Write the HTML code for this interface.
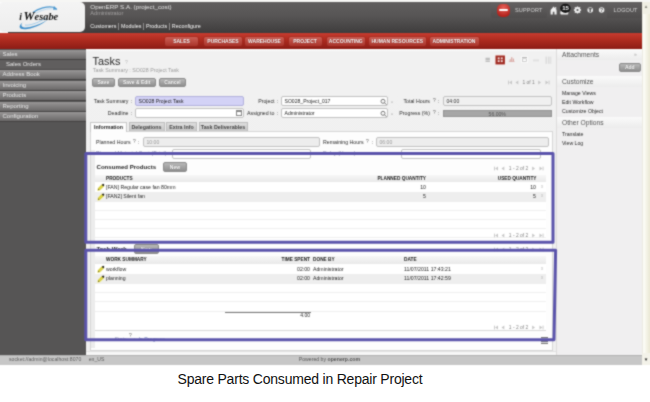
<!DOCTYPE html>
<html>
<head>
<meta charset="utf-8">
<title>Spare Parts Consumed in Repair Project</title>
<style>
html,body{margin:0;padding:0;}
body{width:650px;height:402px;position:relative;overflow:hidden;background:#fff;font-family:"Liberation Sans",sans-serif;}
#shot{position:absolute;left:0;top:0;width:650px;height:368px;overflow:hidden;background:#fff;filter:url(#soft);}
.a{position:absolute;}
.t{position:absolute;white-space:nowrap;line-height:1;font-size:6px;color:#444;}
.b{font-weight:bold;}
/* header */
#hdr{left:0;top:2.4px;width:642.4px;height:31px;background:linear-gradient(#605e5e 0%,#575555 45%,#3e3c3c 100%);}
#logo{left:-1px;top:2.3px;width:86.4px;height:30.2px;background:linear-gradient(#f4f4f4,#ededed);border-radius:5px;}
#red{left:0;top:33px;width:642px;height:16px;background:linear-gradient(#c63b2f 0%,#ad2b1f 45%,#8c1c15 100%);}
.rb{position:absolute;top:36.5px;height:9px;border-radius:2px;background:linear-gradient(#cc5f55,#aa342b);box-shadow:0 0 0 1px rgba(150,40,30,.4);color:#fff;font-size:5px;font-weight:bold;text-align:center;line-height:9.5px;white-space:nowrap;text-shadow:0 0 1px rgba(70,0,0,.8);}
/* sidebar */
#side{left:0;top:49px;width:85.7px;height:306px;background:#565555;}
.mi{position:absolute;left:0;width:86px;height:10px;background:linear-gradient(#989696,#6a6868);border-bottom:1px solid #454343;box-sizing:border-box;color:#e6e6e6;font-size:6px;line-height:9px;padding-left:2.5px;white-space:nowrap;}
.mi.sub{background:#605e5e;padding-left:6px;border-bottom-color:#4c4a4a;}
/* main */
#main{left:86px;top:49px;width:470px;height:303px;background:linear-gradient(#fcfcfc 0,#f1f1f1 3px,#efefef 100%);}
#under{left:86px;top:351px;width:470px;height:4px;background:#f7f7f7;border-top:1px solid #e2e2e2;box-sizing:border-box;}
#rside{left:556px;top:49px;width:86.5px;height:306px;background:#f0eff0;border-left:1px solid #dddcdc;box-sizing:border-box;}
#scroll{left:641.6px;top:2px;width:8.4px;height:363px;background:linear-gradient(90deg,#e4e2d6 0,#fdfdf9 1.6px,#f6f5ea 4px,#e8e6d2 8.4px);}
#foot{left:0;top:355px;width:641.6px;height:9.5px;background:#c7c7c7;border-top:1px solid #b2b2b2;box-sizing:border-box;}
.btn{position:absolute;height:9px;border-radius:2px;background:linear-gradient(#b8b8b8,#8f8f8f);border:1px solid #8a8a8a;box-sizing:border-box;color:#fff;font-size:5px;font-weight:bold;text-align:center;line-height:7px;white-space:nowrap;text-shadow:0 0 1px rgba(0,0,0,.4);}
.inp{position:absolute;height:10px;background:#fff;border:1px solid #c2c2c2;border-radius:2px;box-sizing:border-box;font-size:5.1px;line-height:8px;color:#1c1c1c;padding-left:2.5px;white-space:nowrap;}
.inp.ro{background:#ededed;color:#999;}
.lbl{position:absolute;white-space:nowrap;line-height:1;font-size:5.25px;color:#2c2c2c;text-align:right;}
.tab{position:absolute;top:122px;height:9px;background:linear-gradient(#dedede,#c6c6c6);border:1px solid #bdbdbd;border-bottom:none;box-sizing:border-box;font-size:5.3px;font-weight:bold;color:#444;text-align:center;line-height:8.5px;white-space:nowrap;}
.tab.on{background:#fdfdfd;color:#222;border-color:#c8c8c8;}
.th{position:absolute;white-space:nowrap;line-height:1;font-size:4.75px;font-weight:bold;color:#1a1a1a;}
.td{position:absolute;white-space:nowrap;line-height:1;font-size:5.2px;color:#262626;}
.row{position:absolute;left:95px;width:451px;height:10px;}
.row.alt{background:#eeeeee;}
.row.ln{border-bottom:1px solid #f0f0f0;box-sizing:border-box;}
.pg{position:absolute;white-space:nowrap;line-height:1;font-size:5.3px;color:#c4c4c4;letter-spacing:.15px;word-spacing:.6px;}
.pn{color:#9c9c9c;}
.bx{position:absolute;border:3px solid #5b53ad;box-sizing:border-box;}
.rh{position:absolute;left:557px;width:85px;height:11px;background:linear-gradient(#fafafa,#ececec);font-size:6.7px;color:#545454;line-height:11px;padding-left:5px;box-sizing:border-box;white-space:nowrap;}
.rl{position:absolute;left:562px;white-space:nowrap;line-height:1;font-size:5.2px;color:#2a2a2a;}
#cap{position:absolute;left:177.5px;top:368.9px;font-size:14px;letter-spacing:-0.21px;color:#111;line-height:20px;white-space:nowrap;}
</style>
</head>
<body>
<svg width="0" height="0" style="position:absolute"><defs><filter id="soft" x="0" y="0" width="100%" height="100%" color-interpolation-filters="sRGB"><feConvolveMatrix order="3" kernelMatrix="0.04 0.1 0.04 0.1 0.44 0.1 0.04 0.1 0.04" edgeMode="duplicate" preserveAlpha="true"/></filter></defs></svg>
<div id="shot">
  <div class="a" id="hdr"></div>
  <div class="a" style="left:0;top:2px;width:8px;height:31px;background:#fbfbfb;"></div>
  <div class="a" id="logo"></div>
  <!-- logo -->
  <svg class="a" style="left:14px;top:3px" width="60" height="28" viewBox="0 0 60 28">
    <path d="M8.5 19.5C5.5 23.5 9 25.5 16 24C23 22.5 31 19 35 15.5C30 20.5 21 24.8 13.5 26C5 27.3 3.5 23.5 8.5 19.5Z" fill="#3f8fcb"/>
    <path d="M11 22C15 23 24 20 32 15" fill="none" stroke="#8fc3e8" stroke-width=".8"/>
    <path d="M19 9.5C24 5.5 33 3 39.5 4.2L42.8 6.2" fill="none" stroke="#4a97d0" stroke-width="1.1"/>
    <path d="M40 3L43.3 6.6L39 6.8Z" fill="#4a97d0"/>
    <path d="M22 10.5C27 7 34 5.5 38 6" fill="none" stroke="#a8d0ee" stroke-width=".7"/>
    <text x="5.3" y="16.6" font-family="Liberation Serif,serif" font-style="italic" font-weight="bold" font-size="9.6" fill="#111" letter-spacing=".2">i</text>
    <text x="9.6" y="17" font-family="Liberation Serif,serif" font-style="italic" font-weight="bold" font-size="12.5" fill="#111">W</text>
    <text x="20.6" y="16.8" font-family="Liberation Serif,serif" font-style="italic" font-weight="bold" font-size="9.6" fill="#111" textLength="23.6" lengthAdjust="spacingAndGlyphs">esabe</text>
  </svg>
  <div class="t" style="left:90.3px;top:4px;font-size:6.25px;color:#e2e2e2;">OpenERP S.A. (project_cost)</div>
  <div class="t" style="left:90.3px;top:11px;font-size:5.6px;color:#a3a1a1;">Administrator</div>
  <div class="t" style="left:90.3px;top:23px;font-size:5.4px;color:#f6f6f6;word-spacing:0;">Customers <span style="display:inline-block;width:0;height:7px;border-left:1px solid #8f8d8d;vertical-align:-1.6px;margin:0 .3px;"></span> Modules <span style="display:inline-block;width:0;height:7px;border-left:1px solid #8f8d8d;vertical-align:-1.6px;margin:0 .3px;"></span> Products <span style="display:inline-block;width:0;height:7px;border-left:1px solid #8f8d8d;vertical-align:-1.6px;margin:0 .3px;"></span> Reconfigure</div>

  <!-- top right -->
  <div class="a" style="left:491px;top:2.5px;width:55.5px;height:15.3px;background:linear-gradient(#626060,#4f4d4d);border-radius:0 0 2px 2px;"></div>
  <div class="a" style="left:497px;top:3.7px;width:13.4px;height:13px;border-radius:5px;background:radial-gradient(circle at 50% 30%,#e8625a,#b3221b 75%);"></div>
  <div class="a" style="left:499.4px;top:8.6px;width:8.6px;height:2.9px;background:#fff;border-radius:1px;"></div>
  <div class="t" style="left:515px;top:8px;font-size:5.5px;color:#d6d6d6;letter-spacing:.15px;">SUPPORT</div>
  <svg class="a" style="left:549px;top:2px" width="60" height="16" viewBox="0 0 60 16">
    <path d="M1.6 12.6V8L4.6 4.4L7.6 8V12.6H5.4V9.8H3.8V12.6Z" fill="#f0f0f0"/>
    <rect x="6.2" y="5" width="1" height="2.6" fill="#f0f0f0"/>
    <rect x="11.3" y="9" width="8" height="3.6" rx="1" fill="#ededed"/>
    <ellipse cx="16.4" cy="6.3" rx="5.2" ry="4.6" fill="#151515"/>
    <text x="16.5" y="8.3" font-family="Liberation Sans,sans-serif" font-size="6" font-weight="bold" fill="#fff" text-anchor="middle">15</text>
    <g transform="translate(28.5 8)"><circle r="2.9" fill="#efefef"/><g stroke="#efefef" stroke-width="1.3"><path d="M-3.6 0H3.6M0 -3.6V3.6M-2.6 -2.6L2.6 2.6M-2.6 2.6L2.6 -2.6"/></g><circle r="1.1" fill="#555"/></g>
    <circle cx="41.2" cy="8" r="2.8" fill="#ededed"/><rect x="40.5" y="5.8" width="1.4" height="4.4" fill="#555"/><rect x="39.4" y="6.3" width="3.6" height=".9" fill="#555"/>
    <circle cx="52.6" cy="8" r="2.8" fill="#ededed"/><text x="52.6" y="9.9" font-size="5" font-weight="bold" fill="#555" text-anchor="middle" font-family="Liberation Sans,sans-serif">?</text>
  </svg>
  <div class="a" style="left:607px;top:2.5px;width:35px;height:15.3px;background:linear-gradient(#626060,#4f4d4d);"></div>
  <div class="t" style="left:613.5px;top:8px;font-size:5.5px;color:#d6d6d6;letter-spacing:.15px;">LOGOUT</div>

  <div class="a" id="red"></div>
  <div class="rb" style="left:165px;width:33px;">SALES</div>
  <div class="rb" style="left:204px;width:38px;">PURCHASES</div>
  <div class="rb" style="left:245px;width:39px;">WAREHOUSE</div>
  <div class="rb" style="left:288.5px;width:33px;">PROJECT</div>
  <div class="rb" style="left:326.5px;width:38.5px;">ACCOUNTING</div>
  <div class="rb" style="left:369px;width:56.5px;">HUMAN RESOURCES</div>
  <div class="rb" style="left:429.5px;width:49px;">ADMINISTRATION</div>

  <!-- sidebar -->
  <div class="a" id="side"></div>
  <div class="mi" style="top:49.5px;">Sales</div>
  <div class="mi sub" style="top:59.5px;">Sales Orders</div>
  <div class="mi" style="top:70px;">Address Book</div>
  <div class="mi" style="top:80.5px;">Invoicing</div>
  <div class="mi" style="top:91px;">Products</div>
  <div class="mi" style="top:101.5px;">Reporting</div>
  <div class="mi" style="top:112px;">Configuration</div>

  <!-- main -->
  <div class="a" id="main"></div>
  <div class="a" id="under"></div>
  <div class="a" id="rside"></div>

  <div class="t" style="left:92.6px;top:55.6px;font-size:10.9px;color:#262626;">Tasks</div>
  <div class="t" style="left:125px;top:59.5px;font-size:5px;color:#bbb;">?</div>
  <div class="t" style="left:92.8px;top:68px;font-size:5.3px;color:#9c9c9c;">Task Summary : SO028 Project Task</div>
  <div class="btn" style="left:92px;top:77.5px;width:22.7px;">Save</div>
  <div class="btn" style="left:117.5px;top:77.5px;width:38.3px;">Save &amp; Edit</div>
  <div class="btn" style="left:159px;top:77.5px;width:27px;">Cancel</div>

  <!-- view icons -->
  <svg class="a" style="left:483.5px;top:52.5px" width="70" height="14" viewBox="0 0 70 14">
    <g fill="#a9a9a9"><rect x="1.5" y="4.8" width="4.4" height=".9"/><rect x="1.5" y="6.3" width="4.4" height=".9"/><rect x="1.5" y="7.8" width="4.4" height=".9"/></g>
    <rect x="10.8" y="1.8" width="10.8" height="10.2" rx="1" fill="#f8eceb"/>
    <rect x="11.5" y="2.5" width="9.4" height="8.9" fill="#a02a21"/>
    <g fill="#f1dcda"><rect x="13.7" y="4.4" width="1.9" height="1.9"/><rect x="16.8" y="4.4" width="1.9" height="1.9"/><rect x="13.7" y="7.2" width="1.9" height="1.9"/><rect x="16.8" y="7.2" width="1.9" height="1.9"/></g>
    <g fill="#d7a19b"><rect x="25.6" y="6.2" width="1.1" height="2.3"/><rect x="27.2" y="4.2" width="1.1" height="4.3"/><rect x="28.8" y="5.6" width="1.1" height="2.9"/><rect x="24.8" y="8.4" width="5.8" height=".6"/></g>
    <rect x="37" y="3.4" width="7" height="6.2" fill="#fdfdfd"/>
    <g fill="#b9b9b9"><rect x="38" y="4" width="5" height="1"/><rect x="38.6" y="5.8" width="3.8" height="2.8" fill="none" stroke="#bcbcbc" stroke-width=".7"/></g>
    <g fill="#e1e1e1"><rect x="49" y="6.4" width="6" height="2"/></g><g fill="#dcdcdc"><rect x="61.5" y="3.6" width="1.6" height="7.2"/><rect x="64" y="3.6" width="1.6" height="7.2"/><rect x="66.3" y="3.6" width="1" height="7.2"/></g>
  </svg>
  <svg class="a" style="left:508.3px;top:79.3px" width="43" height="7" viewBox="0 0 43 7"><g fill="#c6c6c6"><rect x="0" y="1.6" width=".9" height="3.8"/><path d="M4 1.6V5.4L1.2 3.5Z"/><path d="M10.3 1.6V5.4L7.5 3.5Z"/><path d="M30.2 1.6V5.4L33 3.5Z"/><path d="M37.5 1.6V5.4L40.3 3.5Z"/><rect x="40.6" y="1.6" width=".9" height="3.8"/></g><text x="20.5" y="5.3" text-anchor="middle" font-family="Liberation Sans,sans-serif" font-size="4.9" fill="#828282">1 of 1</text></svg>

  <!-- tab panel -->
  <div class="a" style="left:90px;top:131px;width:462.5px;height:220px;background:#fdfdfd;border:1px solid #d6d6d6;box-sizing:border-box;"></div>
  <div class="a" style="left:91px;top:150px;width:3.5px;height:198px;background:#ececec;"></div>

  <!-- form row 1 -->
  <div class="lbl" style="left:80px;width:48.5px;top:98.5px;">Task Summary</div>
  <div class="lbl" style="left:130.5px;top:98.5px;">:</div>
  <div class="inp" style="left:135px;top:96px;width:109px;background:#d3d2f6;border-color:#b3b2dd;">SO028 Project Task</div>
  <div class="lbl" style="left:226px;width:48.5px;top:98.5px;">Project</div>
  <div class="lbl" style="left:277px;top:98.5px;">:</div>
  <div class="inp" style="left:281px;top:96px;width:107px;">SO028_Project_017</div>
  <div class="lbl" style="left:380px;width:50px;top:98.5px;">Total Hours</div>
  <div class="lbl" style="left:433px;top:98.7px;font-size:4.8px;color:#5a5a5a;">?</div>
  <div class="lbl" style="left:437.5px;top:98.5px;">:</div>
  <div class="inp ro" style="left:443px;top:96px;width:108.5px;color:#333;background:#f0f0f0;">04:00</div>
  <!-- form row 2 -->
  <div class="lbl" style="left:80px;width:48.5px;top:110.5px;">Deadline</div>
  <div class="lbl" style="left:130.5px;top:110.5px;">:</div>
  <div class="inp" style="left:135px;top:108px;width:109px;"></div>
  <div class="a" style="left:235.5px;top:109.5px;width:6px;height:6px;border:1px solid #888;box-sizing:border-box;background:#fff;border-top-width:2px;"></div>
  <div class="lbl" style="left:226px;width:48.5px;top:110.5px;">Assigned to</div>
  <div class="lbl" style="left:277px;top:110.5px;">:</div>
  <div class="inp" style="left:281px;top:108px;width:107px;">Administrator</div>
  <div class="lbl" style="left:380px;width:50px;top:110.5px;">Progress (%)</div>
  <div class="lbl" style="left:433px;top:110.7px;font-size:4.8px;color:#5a5a5a;">?</div>
  <div class="lbl" style="left:437.5px;top:110.5px;">:</div>
  <div class="a" style="left:443px;top:109.6px;width:108.5px;height:7.8px;background:#a6a6a6;border:1px solid #949494;box-sizing:border-box;font-size:5.1px;color:#555;text-align:center;line-height:6px;">56.00%</div>
  <!-- search icons -->
  <svg class="a" style="left:379px;top:96.5px" width="20" height="22" viewBox="0 0 20 22">
    <g fill="none" stroke="#777" stroke-width="1"><circle cx="4" cy="4.3" r="2"/><path d="M5.5 5.8L7.5 7.8"/><circle cx="4" cy="16.3" r="2"/><path d="M5.5 17.8L7.5 19.8"/></g>
    <g fill="#bbb"><rect x="12" y="4.6" width="2" height="1"/><rect x="12" y="16.6" width="2" height="1"/></g>
  </svg>

  <!-- tabs -->
  <div class="tab on" style="left:90px;width:37px;height:10px;">Information</div>
  <div class="tab" style="left:128.5px;width:36px;">Delegations</div>
  <div class="tab" style="left:166px;width:31px;">Extra Info</div>
  <div class="tab" style="left:198.5px;width:49px;">Task Deliverables</div>

  <div class="lbl" style="left:96px;top:139.5px;">Planned Hours</div>
  <div class="lbl" style="left:133px;top:139.7px;font-size:4.8px;color:#5a5a5a;">?</div>
  <div class="lbl" style="left:138px;top:139.5px;">:</div>
  <div class="inp ro" style="left:143px;top:137px;width:177px;">10:00</div>
  <div class="lbl" style="left:323px;top:139.5px;">Remaining Hours</div>
  <div class="lbl" style="left:366px;top:139.7px;font-size:4.8px;color:#5a5a5a;">?</div>
  <div class="lbl" style="left:371.5px;top:139.5px;">:</div>
  <div class="inp ro" style="left:376px;top:137px;width:172.7px;">06:00</div>
  <!-- hidden row under line -->
  <div class="lbl" style="left:96px;top:150.5px;color:#8d8fb0;letter-spacing:.1px;">Planned Material Cost (Total)</div>
  <div class="inp" style="left:172px;top:148.5px;width:139px;height:10px;"></div>
  <div class="lbl" style="left:323px;top:150.5px;color:#8d8fb0;">Delay (Hours)</div>
  <div class="inp" style="left:401px;top:148.5px;width:140px;height:10px;"></div>

  <!-- Consumed products -->
  <div class="t b" style="left:96.5px;top:164px;font-size:6.1px;color:#262626;">Consumed Products</div>
  <div class="btn" style="left:163px;top:162px;width:24px;height:10px;line-height:8px;">New</div>
  <svg class="a" style="left:494.2px;top:164.7px" width="51" height="7" viewBox="0 0 51 7"><g fill="#c6c6c6"><rect x="0" y="1.6" width=".9" height="3.8"/><path d="M4 1.6V5.4L1.2 3.5Z"/><path d="M10.3 1.6V5.4L7.5 3.5Z"/><path d="M38.2 1.6V5.4L41 3.5Z"/><path d="M45.5 1.6V5.4L48.3 3.5Z"/><rect x="48.6" y="1.6" width=".9" height="3.8"/></g><text x="24.5" y="5.3" text-anchor="middle" font-family="Liberation Sans,sans-serif" font-size="4.9" fill="#828282">1 - 2 of 2</text></svg>
  <div class="a" style="left:95px;top:182px;width:451px;height:57px;background:#fff;"></div>
  <div class="a" style="left:95px;top:174.5px;width:451px;height:7.5px;background:linear-gradient(#f7f7f7,#e9e9e9);"></div>
  <div class="th" style="left:106px;top:176.8px;">PRODUCTS</div>
  <div class="th" style="left:366px;top:176.8px;width:60px;text-align:right;">PLANNED QUANTITY</div>
  <div class="th" style="left:476px;top:176.8px;width:60.5px;text-align:right;">USED QUANTITY</div>
  <div class="row alt" style="top:192px;height:9.5px;"></div>
  <div class="row ln" style="top:201.5px;height:9.5px;"></div>
  <div class="row ln" style="top:211px;height:9px;"></div>
  <div class="row ln" style="top:220px;height:9px;"></div>
  <div class="row ln" style="top:229px;height:9px;"></div>
  <div class="td" style="left:106px;top:184.5px;">[FAN] Regular case fan 80mm</div>
  <div class="td" style="left:106px;top:194px;">[FAN2] Silent fan</div>
  <div class="td" style="left:396px;top:184.5px;width:30px;text-align:right;">10</div>
  <div class="td" style="left:396px;top:194px;width:30px;text-align:right;">5</div>
  <div class="td" style="left:506px;top:184.5px;width:30px;text-align:right;">10</div>
  <div class="td" style="left:506px;top:194px;width:30px;text-align:right;">5</div>
  <div class="td" style="left:541px;top:184.5px;color:#bbb;font-size:4.5px;">x</div>
  <div class="td" style="left:541px;top:194px;color:#bbb;font-size:4.5px;">x</div>
  <svg class="a" style="left:96.5px;top:182px" width="9" height="20" viewBox="0 0 9 20">
    <g><path d="M1.5 6.3L5 2.8L6.5 4.3L3 7.8L1 8.3Z" fill="none" stroke="#f6f2a8" stroke-width="1.6" stroke-linejoin="round"/><path d="M1.6 6.2L4.9 2.9L6.3 4.3L3 7.6L1.1 8.1Z" fill="#e3da38" stroke="#8d8420" stroke-width=".35"/><path d="M4.9 2.9L5.7 2.1Q6.2 1.6 6.7 2.1L7.1 2.5Q7.6 3 7.1 3.5L6.3 4.3Z" fill="#1c1c1c"/><path d="M1.1 8.1L1.5 6.9L2.3 7.7Z" fill="#3a3410"/></g>
    <g transform="translate(0 9.6)"><path d="M1.5 6.3L5 2.8L6.5 4.3L3 7.8L1 8.3Z" fill="none" stroke="#f6f2a8" stroke-width="1.6" stroke-linejoin="round"/><path d="M1.6 6.2L4.9 2.9L6.3 4.3L3 7.6L1.1 8.1Z" fill="#e3da38" stroke="#8d8420" stroke-width=".35"/><path d="M4.9 2.9L5.7 2.1Q6.2 1.6 6.7 2.1L7.1 2.5Q7.6 3 7.1 3.5L6.3 4.3Z" fill="#1c1c1c"/><path d="M1.1 8.1L1.5 6.9L2.3 7.7Z" fill="#3a3410"/></g>
  </svg>
  <svg class="a" style="left:494.2px;top:231.7px" width="51" height="7" viewBox="0 0 51 7"><g fill="#c6c6c6"><rect x="0" y="1.6" width=".9" height="3.8"/><path d="M4 1.6V5.4L1.2 3.5Z"/><path d="M10.3 1.6V5.4L7.5 3.5Z"/><path d="M38.2 1.6V5.4L41 3.5Z"/><path d="M45.5 1.6V5.4L48.3 3.5Z"/><rect x="48.6" y="1.6" width=".9" height="3.8"/></g><text x="24.5" y="5.3" text-anchor="middle" font-family="Liberation Sans,sans-serif" font-size="4.9" fill="#828282">1 - 2 of 2</text></svg>

  <!-- Task work -->
  <div class="t b" style="left:96.5px;top:245.7px;font-size:6.1px;color:#1e1e1e;">Task Work</div>
  <div class="btn" style="left:134px;top:244px;width:24.5px;height:10px;line-height:8px;">New</div>
  <svg class="a" style="left:494.2px;top:246.2px" width="51" height="7" viewBox="0 0 51 7"><g fill="#c6c6c6"><rect x="0" y="1.6" width=".9" height="3.8"/><path d="M4 1.6V5.4L1.2 3.5Z"/><path d="M10.3 1.6V5.4L7.5 3.5Z"/><path d="M38.2 1.6V5.4L41 3.5Z"/><path d="M45.5 1.6V5.4L48.3 3.5Z"/><rect x="48.6" y="1.6" width=".9" height="3.8"/></g><text x="24.5" y="5.3" text-anchor="middle" font-family="Liberation Sans,sans-serif" font-size="4.9" fill="#828282">1 - 2 of 2</text></svg>
  <div class="a" style="left:95px;top:263.5px;width:451px;height:67px;background:#fff;border-bottom:1px solid #d8d8d8;box-sizing:border-box;"></div>
  <div class="a" style="left:95px;top:255.5px;width:451px;height:8.5px;background:linear-gradient(#f7f7f7,#e9e9e9);"></div>
  <div class="th" style="left:106px;top:258.3px;">WORK SUMMARY</div>
  <div class="th" style="left:260px;top:258.3px;width:50px;text-align:right;">TIME SPENT</div>
  <div class="th" style="left:313px;top:258.3px;">DONE BY</div>
  <div class="th" style="left:404px;top:258.3px;">DATE</div>
  <div class="row alt" style="top:273.7px;"></div>
  <div class="row ln" style="top:283.7px;height:9px;"></div>
  <div class="row ln" style="top:292.7px;height:9.5px;"></div>
  <div class="row ln" style="top:302.2px;height:9.5px;"></div>
  <div class="td" style="left:106px;top:266.5px;">workflow</div>
  <div class="td" style="left:106px;top:276px;">planning</div>
  <div class="td" style="left:280px;top:266.5px;width:30px;text-align:right;">02:00</div>
  <div class="td" style="left:280px;top:276px;width:30px;text-align:right;">02:00</div>
  <div class="td" style="left:313px;top:266.5px;">Administrator</div>
  <div class="td" style="left:313px;top:276px;">Administrator</div>
  <div class="td" style="left:404px;top:266.5px;">11/07/2011 17:43:21</div>
  <div class="td" style="left:404px;top:276px;">11/07/2011 17:42:59</div>
  <div class="td" style="left:541px;top:266.5px;color:#bbb;font-size:4.5px;">x</div>
  <div class="td" style="left:541px;top:276px;color:#bbb;font-size:4.5px;">x</div>
  <svg class="a" style="left:96.5px;top:264px" width="9" height="20" viewBox="0 0 9 20">
    <g><path d="M1.5 6.3L5 2.8L6.5 4.3L3 7.8L1 8.3Z" fill="none" stroke="#f6f2a8" stroke-width="1.6" stroke-linejoin="round"/><path d="M1.6 6.2L4.9 2.9L6.3 4.3L3 7.6L1.1 8.1Z" fill="#e3da38" stroke="#8d8420" stroke-width=".35"/><path d="M4.9 2.9L5.7 2.1Q6.2 1.6 6.7 2.1L7.1 2.5Q7.6 3 7.1 3.5L6.3 4.3Z" fill="#1c1c1c"/><path d="M1.1 8.1L1.5 6.9L2.3 7.7Z" fill="#3a3410"/></g><g transform="translate(0 9.7)"><path d="M1.5 6.3L5 2.8L6.5 4.3L3 7.8L1 8.3Z" fill="none" stroke="#f6f2a8" stroke-width="1.6" stroke-linejoin="round"/><path d="M1.6 6.2L4.9 2.9L6.3 4.3L3 7.6L1.1 8.1Z" fill="#e3da38" stroke="#8d8420" stroke-width=".35"/><path d="M4.9 2.9L5.7 2.1Q6.2 1.6 6.7 2.1L7.1 2.5Q7.6 3 7.1 3.5L6.3 4.3Z" fill="#1c1c1c"/><path d="M1.1 8.1L1.5 6.9L2.3 7.7Z" fill="#3a3410"/></g>
  </svg>
  <div class="a" style="left:224.5px;top:312px;width:86px;height:1px;background:#777;"></div>
  <div class="td" style="left:280px;top:313px;width:30px;text-align:right;font-size:5px;">4.00</div>
  <svg class="a" style="left:494.2px;top:323.7px" width="51" height="7" viewBox="0 0 51 7"><g fill="#c6c6c6"><rect x="0" y="1.6" width=".9" height="3.8"/><path d="M4 1.6V5.4L1.2 3.5Z"/><path d="M10.3 1.6V5.4L7.5 3.5Z"/><path d="M38.2 1.6V5.4L41 3.5Z"/><path d="M45.5 1.6V5.4L48.3 3.5Z"/><rect x="48.6" y="1.6" width=".9" height="3.8"/></g><text x="24.5" y="5.3" text-anchor="middle" font-family="Liberation Sans,sans-serif" font-size="4.9" fill="#828282">1 - 2 of 2</text></svg>
  <div class="lbl" style="left:114.5px;top:337px;color:#8d8fb0;">State</div>
  <div class="lbl" style="left:129px;top:333.9px;font-size:4.8px;color:#5a5a5a;">?</div>
  <div class="lbl" style="left:134px;top:337px;color:#8d8fb0;">: &nbsp;<span style="color:#7a86c0">In Progress</span></div>
  <div class="a" style="left:540.8px;top:336.5px;width:7px;height:7px;background:repeating-linear-gradient(#777 0 1px,#ddd 1px 2px);"></div>

  <!-- blue boxes -->
  <svg class="a" style="left:0;top:0" width="650" height="366" viewBox="0 0 650 366">
    <g fill="none" stroke="#5b54ab" stroke-width="3" stroke-linejoin="round">
      <path d="M85.8 153.4H553V242.2H85.8Z"/>
      <path d="M85.8 250.2H555.6L554 339.8H85.8Z"/>
    </g>
  </svg>

  <!-- right sidebar -->
  <div class="rh" style="top:49px;">Attachments</div>
  <div class="t" style="left:634px;top:51.5px;font-size:5px;color:#aaa;">»</div>
  <div class="btn" style="left:619px;top:63px;width:21.5px;height:8.5px;line-height:6.5px;">Add</div>
  <div class="rh" style="top:75.5px;">Customize</div>
  <div class="rl" style="top:90.5px;">Manage Views</div>
  <div class="rl" style="top:99.5px;">Edit Workflow</div>
  <div class="rl" style="top:108.5px;">Customize Object</div>
  <div class="rh" style="top:116.5px;">Other Options</div>
  <div class="rl" style="top:131.5px;">Translate</div>
  <div class="rl" style="top:140.5px;">View Log</div>

  <div class="a" id="foot"></div>
  <div class="t" style="left:9px;top:357.3px;font-size:5.1px;color:#5c5c5c;letter-spacing:.05px;">socket://admin@localhost:8070 &nbsp;&nbsp;&nbsp; en_US</div>
  <div class="t" style="left:298.7px;top:357.3px;font-size:5.2px;color:#555;">Powered by <b>openerp.com</b></div>
  <div class="a" id="scroll"></div>
  <div class="a" style="left:642px;top:353px;width:8px;height:11.5px;background:#f3f2e9;border-radius:2px 0 0 0;"></div>
  <div class="t" style="left:643.7px;top:357.8px;font-size:4.6px;color:#222;">▼</div>
  <div class="a" style="left:642px;top:2px;width:8px;height:11.5px;background:#f0efe4;"></div>
  <div class="t" style="left:643.7px;top:5.3px;font-size:4.6px;color:#8a8a80;">▲</div>
  <div class="a" style="left:0;top:0;width:650px;height:2px;background:#f6f6f4;"></div>
</div>
<div id="cap">Spare Parts Consumed in Repair Project</div>
</body>
</html>
